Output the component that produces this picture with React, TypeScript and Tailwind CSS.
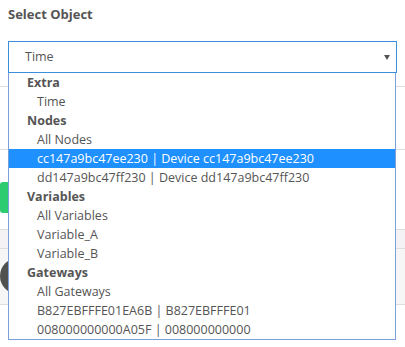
const groups = [
  { label: 'Extra', items: ['Time'] },
  {
    label: 'Nodes',
    items: ['All Nodes', 'cc147a9bc47ee230 | Device cc147a9bc47ee230', 'dd147a9bc47ff230 | Device dd147a9bc47ff230'],
  },
  { label: 'Variables', items: ['All Variables', 'Variable_A', 'Variable_B'] },
  { label: 'Gateways', items: ['All Gateways', 'B827EBFFFE01EA6B | B827EBFFFE01', '008000000000A05F | 008000000000'] },
];

const selected = 'cc147a9bc47ee230 | Device cc147a9bc47ee230';

export default function App() {
  return (
    <div className="relative w-[405px] h-[347px] overflow-hidden bg-white text-[#555] font-['Open_Sans',sans-serif]">
      <div className="px-2">
        <div className="pt-[4px] text-[13px] font-bold leading-[20px]">Select Object</div>
        <div className="mt-[17px] h-[32px] border border-[#3d8fdb] flex items-center justify-between pl-[16px] pr-[6px] text-[12.5px]">
          <span className="pt-[1px]">Time</span>
          <span className="w-0 h-0 border-l-[3px] border-r-[3px] border-t-[5px] border-l-transparent border-r-transparent border-t-[#555]" />
        </div>
      </div>

      {/* page content behind the open list */}
      <div className="mt-[13px] h-[63px] border-t border-[#ddd]" />
      <div className="h-[80px] border-t border-[#ddd] pt-[32px]">
        <div className="w-[60px] h-[31px] rounded-[3px] bg-[#2ecc71]" />
      </div>
      <div className="h-[19px] border-t border-[#ddd] bg-[#f5f2f5]" />
      <div className="h-[57px] border-y border-[#ddd] bg-[#f7f6f7] pt-[9px]">
        <div className="w-[36px] h-[36px] rounded-full bg-[#505250]" />
      </div>

      <ul className="absolute left-2 top-[73px] w-[388px] border-x border-b border-[#7b9fdc] bg-white text-[12.5px] leading-[19px]">
        {groups.map((g) => (
          <li key={g.label}>
            <div className="pl-[18px] font-bold">{g.label}</div>
            <ul>
              {g.items.map((it) => (
                <li key={it} className={`pl-[28px] ${it === selected ? 'bg-[#1e90ff] text-white' : ''}`}>
                  {it}
                </li>
              ))}
            </ul>
          </li>
        ))}
      </ul>
    </div>
  );
}
